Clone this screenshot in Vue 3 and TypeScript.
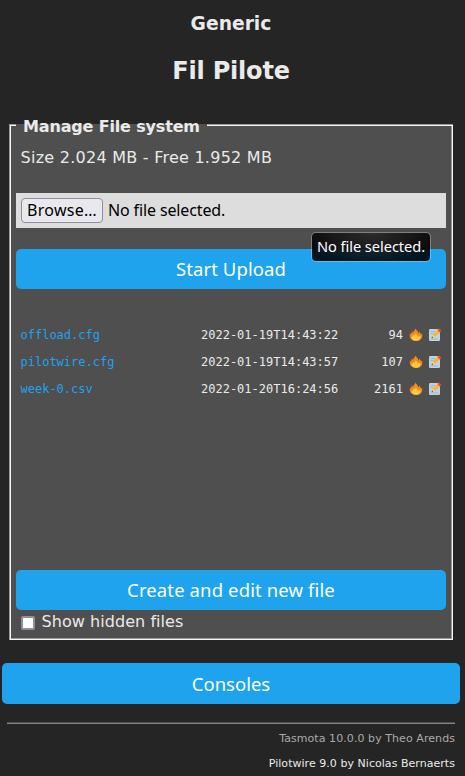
<script setup lang="ts">
import { ref } from 'vue'

interface FileEntry {
  name: string
  date: string
  size: number
}

const files: FileEntry[] = [
  { name: 'offload.cfg', date: '2022-01-19T14:43:22', size: 94 },
  { name: 'pilotwire.cfg', date: '2022-01-19T14:43:57', size: 107 },
  { name: 'week-0.csv', date: '2022-01-20T16:24:56', size: 2161 },
]
const showHidden = ref(false)
</script>

<template>
  <main class="page">
    <header class="heading">
      <h3>Generic</h3>
      <h2>Fil Pilote</h2>
    </header>

    <section class="panel">
      <div class="legend">Manage File system</div>
      <div class="usage">Size 2.024 MB - Free 1.952 MB</div>
      <div class="picker">
        <button class="browse" type="button"><span>Browse…</span></button>
        <span class="chosen">No file selected.</span>
        <div class="tooltip"><span>No file selected.</span></div>
      </div>
      <button class="action upload" type="button">Start Upload</button>
      <div class="files">
        <div v-for="file in files" :key="file.name" class="row">
          <a class="name">{{ file.name }}</a>
          <span class="date">{{ file.date }}</span>
          <span class="size">{{ file.size }}</span>
          <svg class="fire" viewBox="0 0 14 14">
            <path d="M6.300.5C7.300 2.300 9.300 3.300 9.500 5.500c.7-.4.900-1.200.700-2 1.400 1 1.100 2.400 2 3.200.3-.6.400-1 .8-1.400C14.100 9.700 11.900 13 7 13S0 9.700 1 5.300c.4.400.7.900.9 1.500C2.500 5.800 2.200 4.300 3.200 3c.1 1 .3 1.600.9 2C4.200 3.200 6.300 2.600 6.300.5Z" fill="#f58b19" />
            <path d="M6.900 4.800c.2 1.900 1.900 2.400 2 4 .7-.3.900-.8 1-1.400.7.600 1 1.200 1.900 1.100-.3 2.700-2.100 4.200-4.800 4.200s-4.700-1.600-4.700-4.300c.5.400.9.500 1.300.6C3.800 8 3.800 7.100 4.400 6.400c0 .8.400 1.400.8 1.700.1-1.400 1.700-1.800 1.700-3.300Z" fill="#ffc94a" />
          </svg>
          <svg class="edit" viewBox="0 0 14 14">
            <rect x="1" y="1" width="11" height="12" rx="1.200" fill="#bfd4e2" />
            <path d="M2.500 3.500H7M2.500 5.500H5M2.500 11H10" stroke="#91abba" stroke-width=".7" />
            <path d="m3.600 10 1-3.600 5.300-5 2.400 2.500L7 9Z" fill="#f5b638" />
            <path d="m9.400 1.900 1-1q.6-.6 1.200 0l1.300 1.200q.6.600 0 1.200l-1.100 1.100Z" fill="#e5484e" />
            <path d="m3.600 10 1-3.600L7 9Z" fill="#efd5aa" />
            <path d="m3.600 10 .5-1.700 1.100 1.200Z" fill="#383e42" />
          </svg>
        </div>
      </div>
      <button class="action create" type="button">Create and edit new file</button>
      <label class="hidden-toggle">
        <input v-model="showHidden" type="checkbox" />
        <span>Show hidden files</span>
      </label>
    </section>

    <button class="action consoles" type="button">Consoles</button>
    <footer class="footer">
      <div class="tasmota">Tasmota 10.0.0 by Theo Arends</div>
      <div>Pilotwire 9.0 by Nicolas Bernaerts</div>
    </footer>
  </main>
</template>

<style>
body {
  margin: 0;
  background: #252525;
}
</style>

<style scoped>
.page {
  box-sizing: border-box;
  display: flex;
  flex-direction: column;
  width: 465px;
  height: 776px;
  overflow: hidden;
  background: #252525;
  color: #eaeaea;
  font: 16px/19px "DejaVu Sans", sans-serif;
}
.heading {
  height: 124px;
  flex: none;
  padding-right: 3px;
  box-sizing: border-box;
  text-align: center;
}
h3, h2 { margin: 0; }
h3 { padding-top: 13px; font-size: 18.72px; line-height: 22px; }
h2 { padding-top: 22px; font-size: 24px; line-height: 28px; letter-spacing: -.2px; }
.panel {
  box-sizing: border-box;
  flex: none;
  width: 444px;
  height: 516px;
  margin-left: 9px;
  padding: 0 7px;
  background: #4f4f4f;
  box-shadow: inset 1px 1px #9b9b9b, inset -1px -1px #f5f5f5, inset 2px 2px #f5f5f5, inset -2px -2px #9b9b9b;
}
.legend {
  box-sizing: border-box;
  width: 191px;
  height: 19px;
  margin-top: -7px;
  padding-left: 7px;
  background: linear-gradient(transparent 7px, #4f4f4f 7px);
  font-weight: bold;
  letter-spacing: -.16px;
  white-space: nowrap;
}
.usage { padding: 12px 0 0 4.600px; height: 45px; letter-spacing: .25px; }
.picker {
  position: relative;
  box-sizing: border-box;
  display: flex;
  align-items: center;
  gap: 5px;
  height: 35px;
  padding: 0 5px 1px;
  background: #ddd;
  color: #000;
  font: 16px/20px "Noto Sans", sans-serif;
}
.browse {
  box-sizing: border-box;
  width: 82px;
  height: 25px;
  padding: 0 0 1px;
  border: 1px solid #8f8f9d;
  border-radius: 4px;
  background: #e9e9ed;
  color: #000;
  font: inherit;
  letter-spacing: .3px;
}
.chosen { letter-spacing: -.13px; }
.tooltip {
  position: absolute;
  left: 295px;
  top: 39px;
  box-sizing: border-box;
  width: 120px;
  height: 30px;
  border: 1px solid rgba(255, 255, 255, .28);
  border-radius: 5px;
  background: radial-gradient(ellipse at 50% 0, rgba(40, 40, 40, .9), rgba(0, 0, 0, .87) 80%) padding-box;
  color: #fff;
  font-size: 14.600px;
  line-height: 27px;
  letter-spacing: -.04px;
  text-align: center;
  white-space: nowrap;
}
.action {
  display: block;
  width: 430px;
  height: 40px;
  padding: 0;
  border: 0;
  border-radius: 5px;
  background: #1fa3ec;
  color: #faffff;
  font: 18.500px/40px "Noto Sans", sans-serif;
}
.upload { margin-top: 21px; letter-spacing: .1px; }
.create { letter-spacing: .12px; }
.files { height: 249px; padding-top: 32px; }
.row {
  display: grid;
  grid-template-columns: 180px 138px 64px 20px 20px;
  align-items: center;
  height: 27px;
  padding-left: 5px;
  font: 12px/14px "DejaVu Sans Mono", monospace;
}
.name { color: #1fa3ec; margin-left: -.5px; }
.size { text-align: right; }
.fire, .edit { width: 14px; height: 14px; }
.fire { margin-left: 6px; }
.edit { margin-left: 5px; }
.hidden-toggle {
  display: flex;
  align-items: center;
  height: 24px;
  padding-left: 5px;
  gap: 6.600px;
  letter-spacing: .05px;
}
.hidden-toggle span { padding-bottom: 2px; }
.hidden-toggle input {
  appearance: none;
  box-sizing: border-box;
  width: 14px;
  height: 14px;
  margin: 2px 0 0;
  border: 2px solid #8f8f9d;
  border-radius: 2px;
  background: #fff;
}
.consoles {
  flex: none;
  width: 458px;
  height: 41px;
  margin: 23px 0 0 2px;
}
.footer {
  width: 448px;
  box-sizing: border-box;
  margin: 18px 0 0 7px;
  padding: 3px 0 0;
  border-top: 1px solid #4f4f4f;
  box-shadow: inset 0 1px #858585;
  font-size: 11px;
  line-height: 25px;
  letter-spacing: .04px;
  text-align: right;
}
.tasmota { color: #aaa; letter-spacing: .07px; }
</style>
